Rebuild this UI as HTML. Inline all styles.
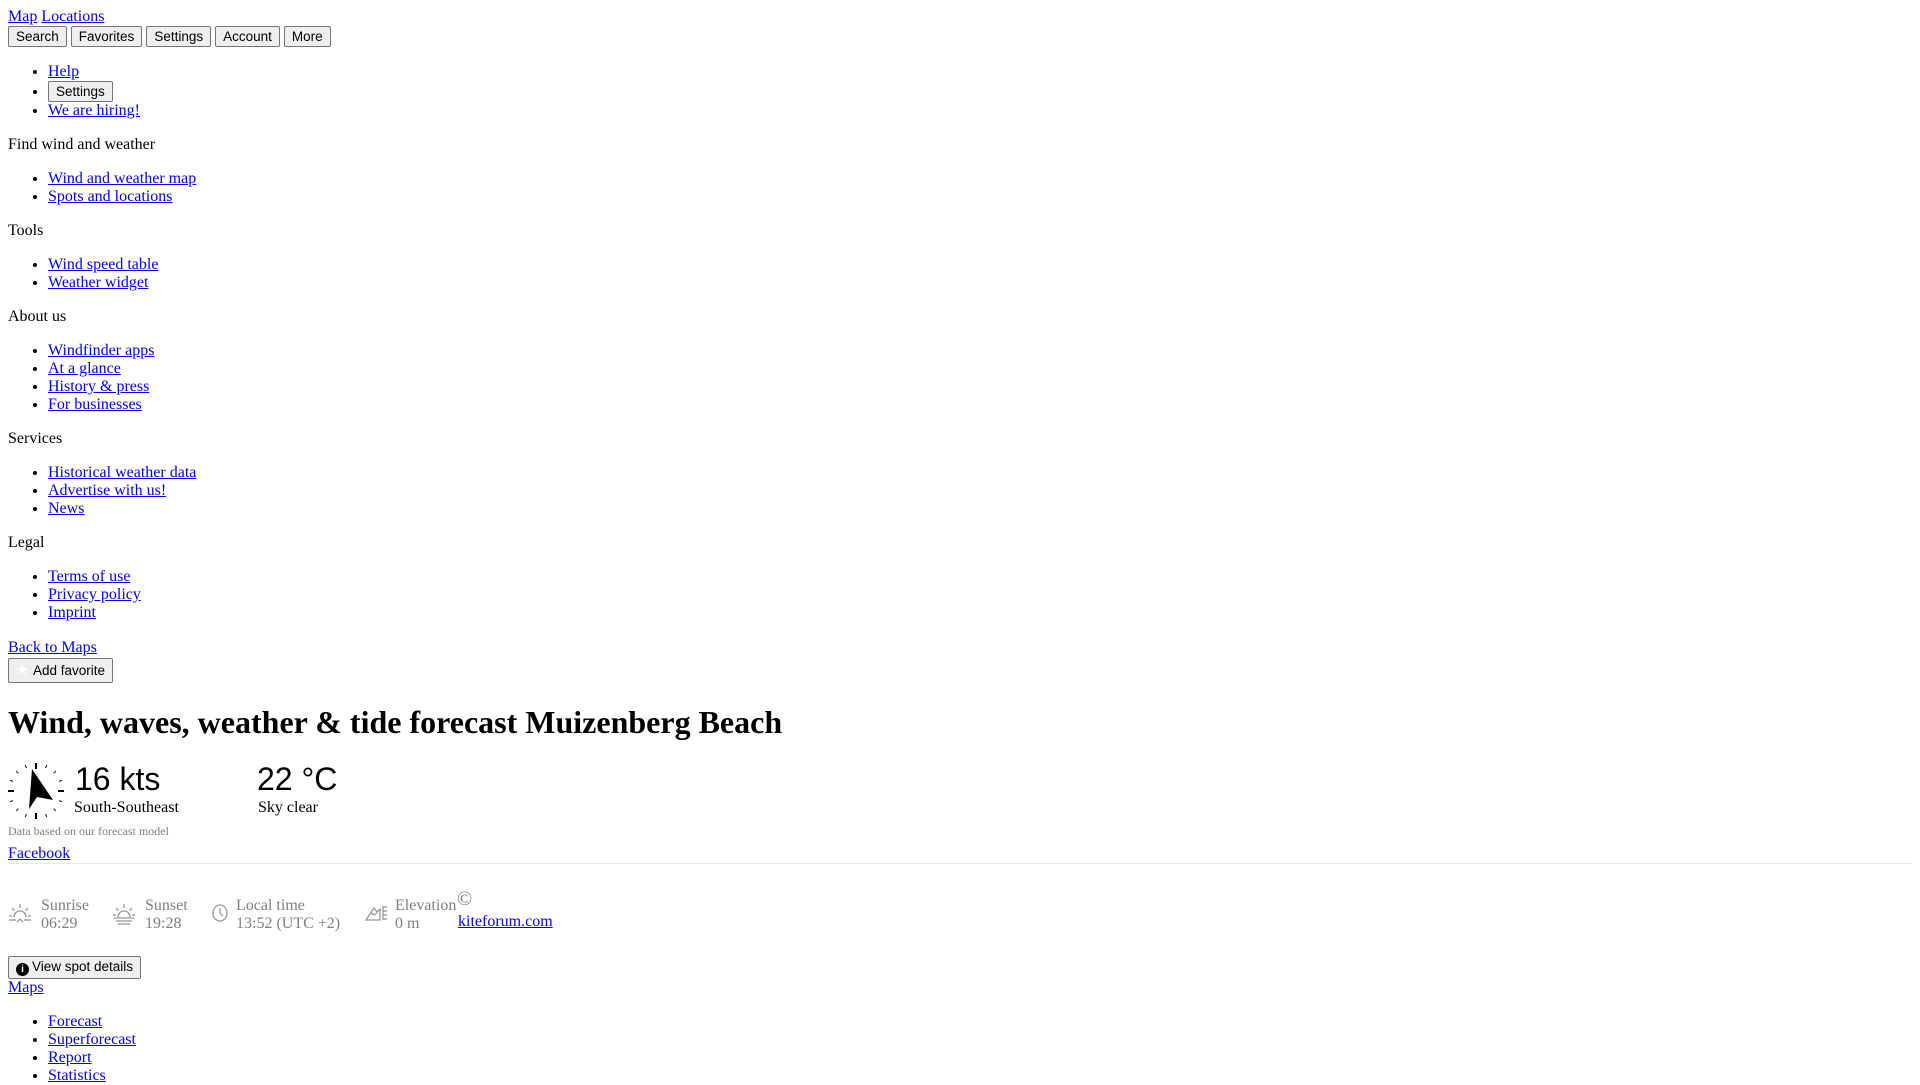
<!DOCTYPE html>
<html><head><meta charset="utf-8"><style>
body{margin:8px;font-family:"Liberation Serif",serif;font-size:16px;color:#000;background:#fff;position:relative;width:1904px;height:1064px;overflow:hidden}
a{color:#0000ee}
button{font-family:"Liberation Sans",sans-serif;font-size:13.5px;background:#efefef;border:1px solid #767676;border-radius:2px;padding:1px 7px;height:21px;color:#000;vertical-align:baseline}
ul{margin:16px 0;padding-left:40px}
p{margin:16px 0}
.abs{position:absolute}
.g{color:#808080}
</style></head><body>
<div><a href="#">Map</a> <a href="#">Locations</a></div>
<div><button>Search</button> <button>Favorites</button> <button>Settings</button> <button>Account</button> <button>More</button></div>
<ul><li><a href="#">Help</a></li><li><button>Settings</button></li><li><a href="#">We are hiring!</a></li></ul>
<p>Find wind and weather</p>
<ul><li><a href="#">Wind and weather map</a></li><li><a href="#">Spots and locations</a></li></ul>
<p>Tools</p>
<ul><li><a href="#">Wind speed table</a></li><li><a href="#">Weather widget</a></li></ul>
<p>About us</p>
<ul><li><a href="#">Windfinder apps</a></li><li><a href="#">At a glance</a></li><li><a href="#">History &amp; press</a></li><li><a href="#">For businesses</a></li></ul>
<p>Services</p>
<ul><li><a href="#">Historical weather data</a></li><li><a href="#">Advertise with us!</a></li><li><a href="#">News</a></li></ul>
<p>Legal</p>
<ul><li><a href="#">Terms of use</a></li><li><a href="#">Privacy policy</a></li><li><a href="#">Imprint</a></li></ul>

<div class="abs" style="left:0;top:631px"><a href="#">Back to Maps</a></div>
<div class="abs" style="left:0;top:650px"><button style="height:25px;padding:1px 7px 1px 24px;position:relative"><span style="position:absolute;left:6px;top:1px;color:#fff;font-size:16px;text-shadow:0 0 1px #ddd">★</span>Add favorite</button></div>
<h1 class="abs" style="left:0;top:692px;margin:0;font-size:32px;line-height:44px;white-space:nowrap">Wind, waves, weather &amp; tide forecast Muizenberg Beach</h1>

<svg class="abs" style="left:-2px;top:753px" width="60" height="60" viewBox="0 0 60 60">
<g stroke="#000" stroke-width="2">
<line x1="30" y1="2" x2="30" y2="8"/><line x1="30" y1="52" x2="30" y2="58"/><line x1="2" y1="30" x2="8" y2="30"/><line x1="52" y1="30" x2="58" y2="30"/>
</g>
<g stroke="#000" stroke-width="1">
<line x1="40.7" y1="4.1" x2="39.6" y2="6.9"/><line x1="49.8" y1="10.2" x2="47.7" y2="12.3"/><line x1="55.9" y1="19.3" x2="53.1" y2="20.4"/><line x1="55.9" y1="40.7" x2="53.1" y2="39.6"/><line x1="49.8" y1="49.8" x2="47.7" y2="47.7"/><line x1="40.7" y1="55.9" x2="39.6" y2="53.1"/><line x1="19.3" y1="55.9" x2="20.4" y2="53.1"/><line x1="10.2" y1="49.8" x2="12.3" y2="47.7"/><line x1="4.1" y1="40.7" x2="6.9" y2="39.6"/><line x1="4.1" y1="19.3" x2="6.9" y2="20.4"/><line x1="10.2" y1="10.2" x2="12.3" y2="12.3"/><line x1="19.3" y1="4.1" x2="20.4" y2="6.9"/>
</g>
<polygon points="26,8 47,39 31,36 23,48" fill="#000"/>
</svg>
<div class="abs" style="left:67px;top:752px;font-family:'Liberation Sans',sans-serif;font-size:32px;line-height:38px">16 kts</div>
<div class="abs" style="left:66px;top:791px">South-Southeast</div>
<div class="abs" style="left:249px;top:752px;font-family:'Liberation Sans',sans-serif;font-size:32px;line-height:38px">22 °C</div>
<div class="abs" style="left:250px;top:791px">Sky clear</div>
<div class="abs g" style="left:0;top:816px;font-size:12px">Data based on our forecast model</div>
<div class="abs" style="left:0;top:837px"><a href="#">Facebook</a></div>
<div class="abs" style="left:0;top:855px;width:1904px;height:1px;background:#e8e8e8"></div>

<svg class="abs" style="left:0;top:895px" width="24" height="22" viewBox="0 0 24 22" fill="none" stroke="#999" stroke-width="1.3">
<line x1="12" y1="1" x2="12" y2="5"/><line x1="4" y1="5" x2="6.5" y2="7.5"/><line x1="20" y1="5" x2="17.5" y2="7.5"/><line x1="1" y1="13" x2="4" y2="13"/><line x1="20" y1="13" x2="23" y2="13"/>
<path d="M6 14a6 6 0 0 1 12 0"/><line x1="1" y1="17" x2="8" y2="17"/><line x1="16" y1="17" x2="23" y2="17"/><path d="M9 19l3-3 3 3"/></svg>
<div class="abs g" style="left:33px;top:889px;line-height:18px">Sunrise<br>06:29</div>
<svg class="abs" style="left:104px;top:895px" width="24" height="22" viewBox="0 0 24 22" fill="none" stroke="#999" stroke-width="1.3">
<line x1="12" y1="1" x2="12" y2="5"/><line x1="4" y1="5" x2="6.5" y2="7.5"/><line x1="20" y1="5" x2="17.5" y2="7.5"/><line x1="1" y1="12" x2="4" y2="12"/><line x1="20" y1="12" x2="23" y2="12"/>
<path d="M6 14a6 6 0 0 1 12 0"/><line x1="2" y1="15" x2="22" y2="15"/><line x1="4" y1="18" x2="20" y2="18"/><line x1="6" y1="21" x2="18" y2="21"/></svg>
<div class="abs g" style="left:137px;top:889px;line-height:18px">Sunset<br>19:28</div>
<svg class="abs" style="left:203px;top:895px" width="18" height="20" viewBox="0 0 18 20" fill="none" stroke="#999" stroke-width="1.3"><ellipse cx="9" cy="10" rx="7" ry="8"/><path d="M9 5v5l3 3"/></svg>
<div class="abs g" style="left:228px;top:889px;line-height:18px">Local time<br>13:52 (UTC +2)</div>
<svg class="abs" style="left:357px;top:895px" width="24" height="20" viewBox="0 0 24 20" fill="none" stroke="#999" stroke-width="1.3"><path d="M1 17L9 5l3 4 3-3v11H1z"/><path d="M6 10l3 2 3-2"/><line x1="18" y1="4" x2="22" y2="4"/><line x1="18" y1="8" x2="22" y2="8"/><line x1="18" y1="12" x2="22" y2="12"/><line x1="18" y1="16" x2="22" y2="16"/><line x1="18" y1="3" x2="18" y2="17"/></svg>
<div class="abs g" style="left:387px;top:889px;line-height:18px">Elevation<br>0 m</div>
<div class="abs g" style="left:449px;top:881px;font-size:20px;line-height:20px">©</div>
<div class="abs" style="left:450px;top:905px"><a href="#">kiteforum.com</a></div>

<div class="abs" style="left:0;top:948px"><button style="height:23px;padding:1px 7px"><span style="display:inline-block;width:13px;height:13px;border-radius:50%;background:#000;color:#fff;font-size:10px;line-height:13px;text-align:center;font-weight:bold;vertical-align:-1px;margin-right:3px">i</span>View spot details</button></div>
<div class="abs" style="left:0;top:971px"><a href="#">Maps</a></div>
<ul class="abs" style="left:0;top:1005px;margin:0;line-height:18px"><li><a href="#">Forecast</a></li><li><a href="#">Superforecast</a></li><li><a href="#">Report</a></li><li><a href="#">Statistics</a></li></ul>
</body></html>
